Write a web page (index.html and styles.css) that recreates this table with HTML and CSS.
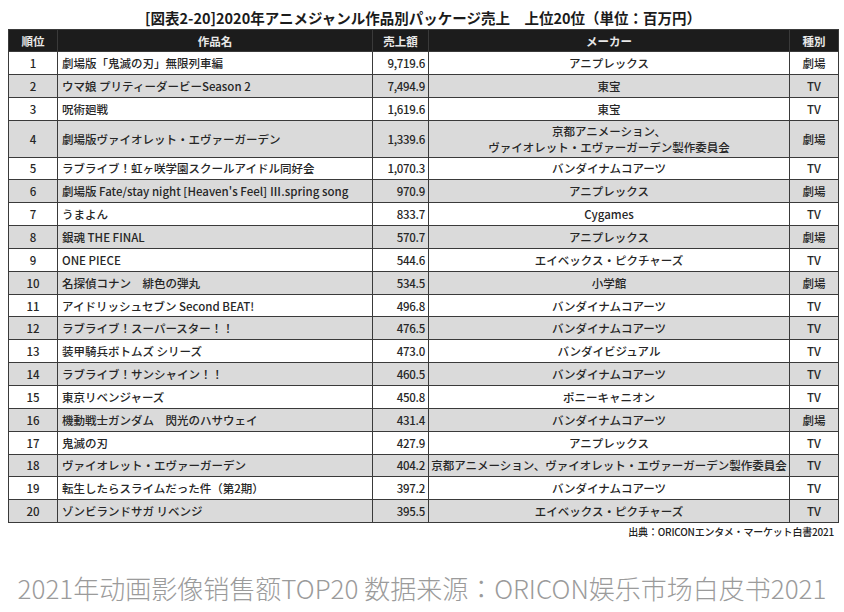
FILE: index.html
```html
<!DOCTYPE html>
<html lang="ja">
<head>
<meta charset="utf-8">
<title>2020年アニメジャンル作品別パッケージ売上</title>
<link rel="stylesheet" href="styles.css">
</head>
<body>
<div class="figure">
  <h1 class="title">[図表2-20]2020年アニメジャンル作品別パッケージ売上　上位20位（単位：百万円）</h1>
  <table class="ranking">
    <colgroup>
      <col class="c-rank"><col class="c-name"><col class="c-sales"><col class="c-maker"><col class="c-type">
    </colgroup>
    <thead>
      <tr><th>順位</th><th>作品名</th><th>売上額</th><th>メーカー</th><th>種別</th></tr>
    </thead>
    <tbody>
      <tr><td class="rank">1</td><td class="name">劇場版「鬼滅の刃」無限列車編</td><td class="sales">9,719.6</td><td class="maker">アニプレックス</td><td class="type">劇場</td></tr>
      <tr><td class="rank">2</td><td class="name">ウマ娘 プリティーダービーSeason 2</td><td class="sales">7,494.9</td><td class="maker">東宝</td><td class="type">TV</td></tr>
      <tr><td class="rank">3</td><td class="name">呪術廻戦</td><td class="sales">1,619.6</td><td class="maker">東宝</td><td class="type">TV</td></tr>
      <tr class="tall"><td class="rank">4</td><td class="name">劇場版ヴァイオレット・エヴァーガーデン</td><td class="sales">1,339.6</td><td class="maker">京都アニメーション、<br>ヴァイオレット・エヴァーガーデン製作委員会</td><td class="type">劇場</td></tr>
      <tr><td class="rank">5</td><td class="name">ラブライブ！虹ヶ咲学園スクールアイドル同好会</td><td class="sales">1,070.3</td><td class="maker">バンダイナムコアーツ</td><td class="type">TV</td></tr>
      <tr><td class="rank">6</td><td class="name">劇場版 Fate/stay night [Heaven's Feel] Ⅲ.spring song</td><td class="sales">970.9</td><td class="maker">アニプレックス</td><td class="type">劇場</td></tr>
      <tr><td class="rank">7</td><td class="name">うまよん</td><td class="sales">833.7</td><td class="maker">Cygames</td><td class="type">TV</td></tr>
      <tr><td class="rank">8</td><td class="name">銀魂 THE FINAL</td><td class="sales">570.7</td><td class="maker">アニプレックス</td><td class="type">劇場</td></tr>
      <tr><td class="rank">9</td><td class="name">ONE PIECE</td><td class="sales">544.6</td><td class="maker">エイベックス・ピクチャーズ</td><td class="type">TV</td></tr>
      <tr><td class="rank">10</td><td class="name">名探偵コナン　緋色の弾丸</td><td class="sales">534.5</td><td class="maker">小学館</td><td class="type">劇場</td></tr>
      <tr><td class="rank">11</td><td class="name">アイドリッシュセブン Second BEAT!</td><td class="sales">496.8</td><td class="maker">バンダイナムコアーツ</td><td class="type">TV</td></tr>
      <tr><td class="rank">12</td><td class="name">ラブライブ！スーパースター！！</td><td class="sales">476.5</td><td class="maker">バンダイナムコアーツ</td><td class="type">TV</td></tr>
      <tr><td class="rank">13</td><td class="name">装甲騎兵ボトムズ シリーズ</td><td class="sales">473.0</td><td class="maker">バンダイビジュアル</td><td class="type">TV</td></tr>
      <tr><td class="rank">14</td><td class="name">ラブライブ！サンシャイン！！</td><td class="sales">460.5</td><td class="maker">バンダイナムコアーツ</td><td class="type">TV</td></tr>
      <tr><td class="rank">15</td><td class="name">東京リベンジャーズ</td><td class="sales">450.8</td><td class="maker">ポニーキャニオン</td><td class="type">TV</td></tr>
      <tr><td class="rank">16</td><td class="name">機動戦士ガンダム　閃光のハサウェイ</td><td class="sales">431.4</td><td class="maker">バンダイナムコアーツ</td><td class="type">劇場</td></tr>
      <tr><td class="rank">17</td><td class="name">鬼滅の刃</td><td class="sales">427.9</td><td class="maker">アニプレックス</td><td class="type">TV</td></tr>
      <tr><td class="rank">18</td><td class="name">ヴァイオレット・エヴァーガーデン</td><td class="sales">404.2</td><td class="maker">京都アニメーション、ヴァイオレット・エヴァーガーデン製作委員会</td><td class="type">TV</td></tr>
      <tr><td class="rank">19</td><td class="name">転生したらスライムだった件（第2期）</td><td class="sales">397.2</td><td class="maker">バンダイナムコアーツ</td><td class="type">TV</td></tr>
      <tr><td class="rank">20</td><td class="name">ゾンビランドサガ リベンジ</td><td class="sales">395.5</td><td class="maker">エイベックス・ピクチャーズ</td><td class="type">TV</td></tr>
    </tbody>
  </table>
  <p class="source">出典：ORICONエンタメ・マーケット白書2021</p>
</div>
<p class="caption">2021年动画影像销售额TOP20 数据来源：ORICON娱乐市场白皮书2021</p>
</body>
</html>
```
FILE: styles.css
```css
html, body {
  margin: 0;
  padding: 0;
  background: #ffffff;
}

body {
  font-family: "Noto Sans CJK JP", "Noto Sans", sans-serif;
  color: #222;
}

.figure {
  padding: 8px 6px 0 8px;
  height: 545px;
  box-sizing: border-box;
}

.title {
  margin: 0;
  height: 21px;
  font-size: 14.5px;
  line-height: 20px;
  font-weight: 700;
  text-align: center;
  color: #1b1b1b;
  letter-spacing: 0;
}

.ranking {
  width: 830px;
  border-collapse: collapse;
  table-layout: fixed;
  font-size: 11.5px;
  font-weight: 500;
  color: #262626;
}

.c-rank { width: 49px; }
.c-name { width: 315px; }
.c-sales { width: 56px; }
.c-maker { width: 361px; }
.c-type { width: 49px; }

.ranking th,
.ranking td {
  border: 1px solid #3a3a3a;
  padding: 0 4px;
  white-space: nowrap;
  overflow: hidden;
}

.ranking th {
  background: #1c1c1c;
  color: #e8e8e8;
  font-weight: 700;
  font-size: 11.5px;
  height: 21px;
  line-height: 14px;
  text-align: center;
}

.ranking tbody tr {
  height: 22.85px;
}

.ranking tbody tr.tall {
  height: 37px;
}

.ranking tbody tr.tall .maker {
  line-height: 16px;
}

.ranking tbody tr:nth-child(even) td {
  background: #dadada;
}

.ranking td {
  line-height: 14px;
}

.rank { text-align: center; }
.name { text-align: left; padding-left: 5px; }
.ranking .sales { text-align: right; padding-right: 3px; letter-spacing: -0.3px; }
.ranking .maker { text-align: center; padding: 0 2px; }
.type { text-align: center; }

.source {
  margin: 2px 4px 0 0;
  text-align: right;
  font-size: 10px;
  font-weight: 500;
  line-height: 14px;
  color: #222;
  letter-spacing: -0.2px;
}

.caption {
  margin: 0;
  padding-top: 27px;
  text-align: center;
  font-family: "Noto Sans CJK SC", "Noto Sans", sans-serif;
  font-weight: 300;
  font-size: 26px;
  line-height: 32px;
  color: #9b9b9b;
}
```
